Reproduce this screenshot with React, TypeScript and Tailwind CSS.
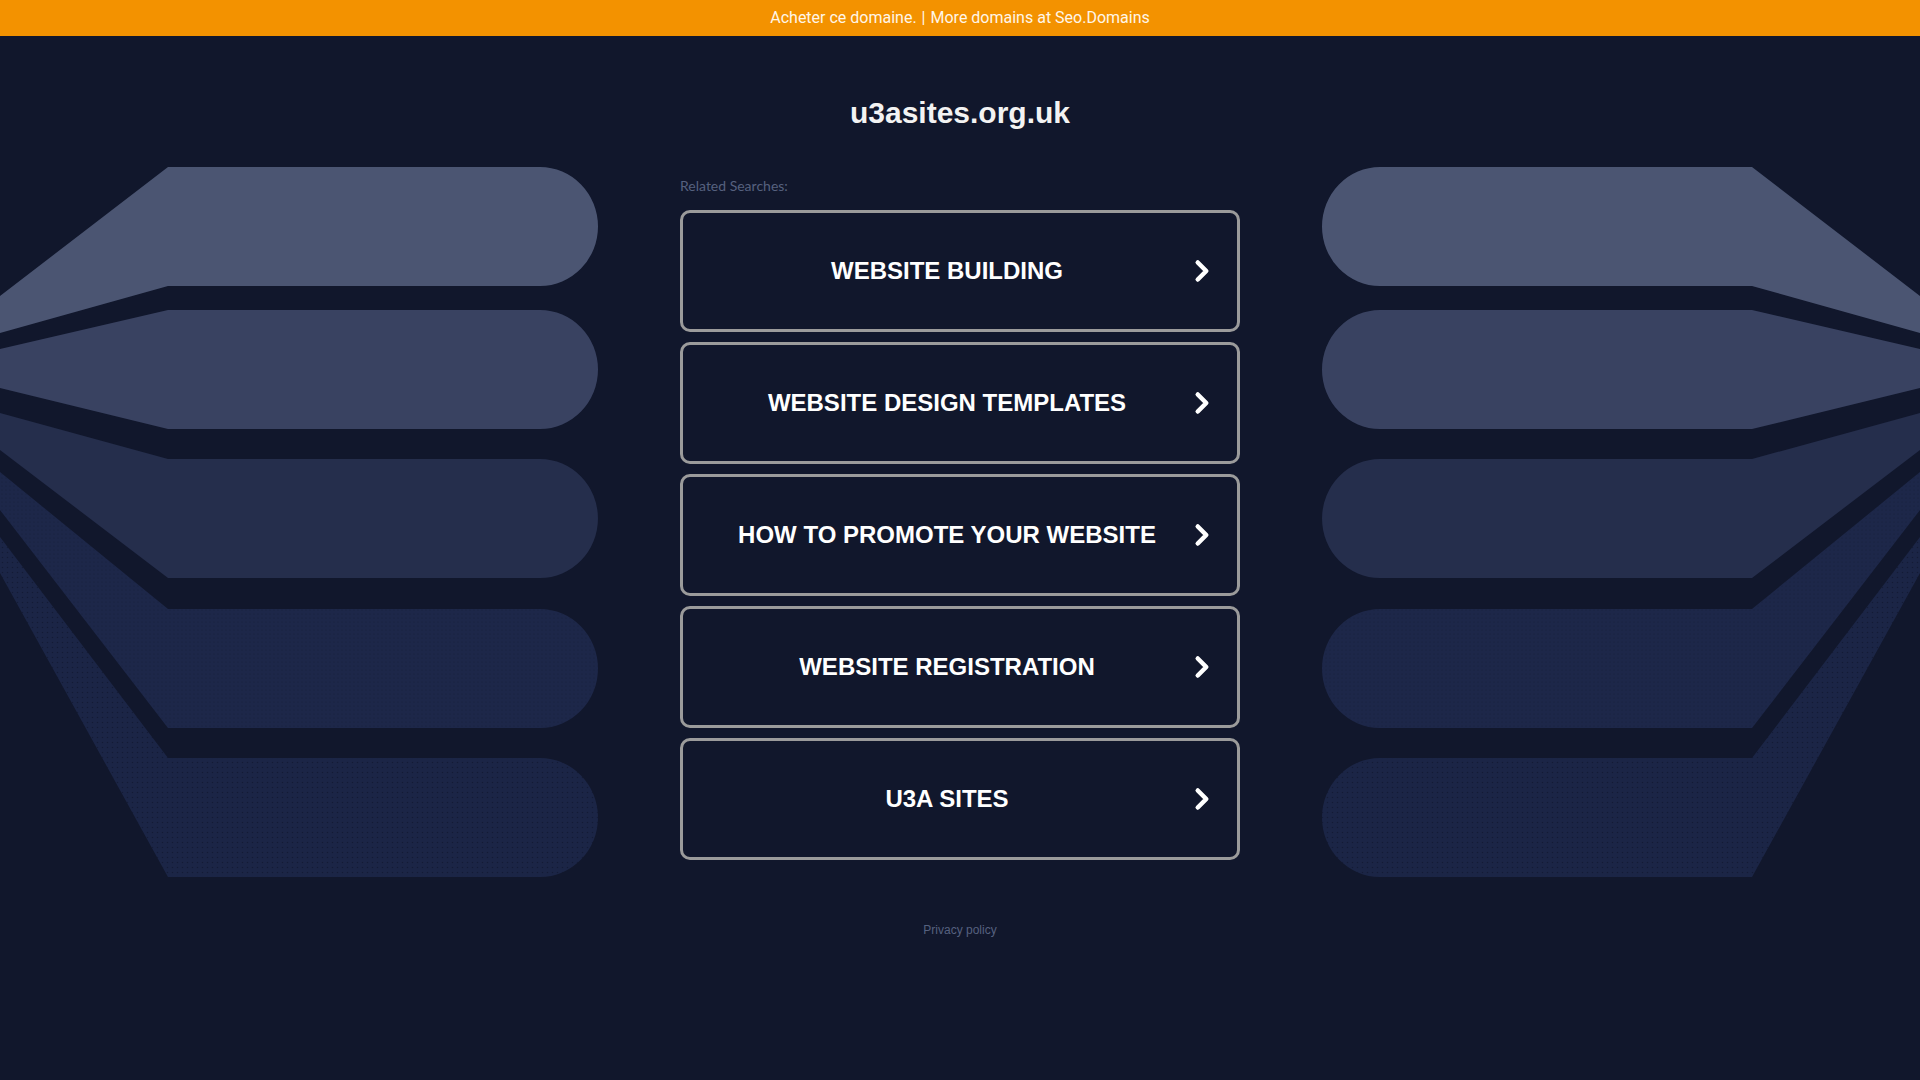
import { ChevronRight } from "lucide-react";

const searches = [
  "WEBSITE BUILDING",
  "WEBSITE DESIGN TEMPLATES",
  "HOW TO PROMOTE YOUR WEBSITE",
  "WEBSITE REGISTRATION",
  "U3A SITES",
];

// left-hand fan of pills; right side is the mirror image
const fan = [
  { d: "M0,296 L168,167 L540,167 A58,59.5 0 0 1 540,286 L168,286 L0,333 Z", fill: "#4b5572" },
  { d: "M0,349 L168,310 L540,310 A58,59.5 0 0 1 540,429 L168,429 L0,388 Z", fill: "#394261" },
  { d: "M0,413 L168,459 L540,459 A58,59.5 0 0 1 540,578 L168,578 L0,450 Z", fill: "#252e4c" },
  { d: "M0,472 L168,609 L540,609 A58,59.5 0 0 1 540,728 L168,728 L0,510 Z", fill: "url(#dots4)" },
  { d: "M0,537 L168,758 L540,758 A58,59.5 0 0 1 540,877 L168,877 L0,573 Z", fill: "url(#dots5)" },
];

function Backdrop() {
  return (
    <svg
      className="pointer-events-none absolute left-0 top-0"
      width={1920}
      height={1080}
      viewBox="0 0 1920 1080"
      aria-hidden="true"
    >
      <defs>
        <pattern id="dots4" width="4" height="4" patternUnits="userSpaceOnUse">
          <rect width="4" height="4" fill="#1d2749" />
          <circle cx="2" cy="2" r="0.6" fill="#151d38" />
        </pattern>
        <pattern id="dots5" width="5" height="5" patternUnits="userSpaceOnUse">
          <rect width="5" height="5" fill="#1b2546" />
          <circle cx="2.5" cy="2.5" r="0.8" fill="#131b35" />
        </pattern>
      </defs>
      <g>
        {fan.map((s, i) => (
          <path key={i} d={s.d} fill={s.fill} />
        ))}
      </g>
      <g transform="translate(1920,0) scale(-1,1)">
        {fan.map((s, i) => (
          <path key={i} d={s.d} fill={s.fill} />
        ))}
      </g>
    </svg>
  );
}

export default function App() {
  return (
    <div className="relative min-h-screen w-full overflow-hidden bg-[#11172c] font-['Liberation_Sans',Arial,sans-serif]">
      <Backdrop />

      {/* offer bar */}
      <div className="relative flex h-9 items-center justify-center bg-[#f39200] font-['Roboto',sans-serif] text-[16px] text-[#fff6e8]">
        <a href="#">Acheter ce domaine.</a>
        <span className="mx-[5px]">|</span>
        <a href="#">More domains at Seo.Domains</a>
      </div>

      <main className="relative mx-auto flex w-[560px] flex-col">
        <h1 className="mt-[60px] text-center text-[30px] font-bold leading-[34px] text-[#f3f3f3]">
          u3asites.org.uk
        </h1>

        <p className="mt-[47px] font-['Lato',sans-serif] text-[14px] leading-[18px] text-[#56617f]">
          Related Searches:
        </p>

        <div className="mt-[15px] flex flex-col gap-[10px]">
          {searches.map((label) => (
            <a
              key={label}
              href="#"
              className="flex h-[122px] items-center rounded-[10px] border-[3px] border-[#9b9b9b] pl-[26px]"
            >
              <span className="flex-1 text-center text-[24px] font-bold text-white">{label}</span>
              <ChevronRight className="mr-[18px] size-[34px] text-white" strokeWidth={3.2} />
            </a>
          ))}
        </div>

        <p className="mt-[63px] text-center text-[12px] leading-[14px] text-[#56617f]">
          Privacy policy
        </p>
      </main>
    </div>
  );
}
